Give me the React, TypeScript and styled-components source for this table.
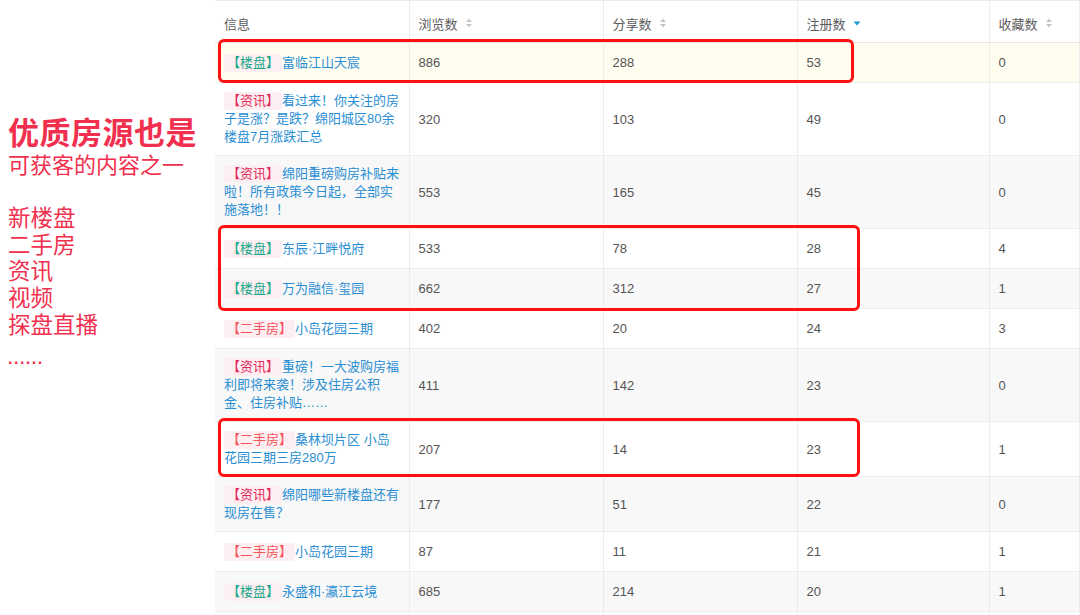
import styled, { createGlobalStyle } from 'styled-components';

type Kind = 'loupan' | 'zixun' | 'ershou';

interface Row {
  kind: Kind;
  title: string;
  views: number;
  shares: number;
  signups: number;
  favs: number;
}

const rows: Row[] = [
  { kind: 'loupan', title: '富临江山天宸', views: 886, shares: 288, signups: 53, favs: 0 },
  { kind: 'zixun', title: '看过来！你关注的房子是涨？是跌？绵阳城区80余楼盘7月涨跌汇总', views: 320, shares: 103, signups: 49, favs: 0 },
  { kind: 'zixun', title: '绵阳重磅购房补贴来啦！所有政策今日起，全部实施落地！！', views: 553, shares: 165, signups: 45, favs: 0 },
  { kind: 'loupan', title: '东辰·江畔悦府', views: 533, shares: 78, signups: 28, favs: 4 },
  { kind: 'loupan', title: '万为融信·玺园', views: 662, shares: 312, signups: 27, favs: 1 },
  { kind: 'ershou', title: '小岛花园三期', views: 402, shares: 20, signups: 24, favs: 3 },
  { kind: 'zixun', title: '重磅！一大波购房福利即将来袭！涉及住房公积金、住房补贴……', views: 411, shares: 142, signups: 23, favs: 0 },
  { kind: 'ershou', title: '桑林坝片区 小岛花园三期三房280万', views: 207, shares: 14, signups: 23, favs: 1 },
  { kind: 'zixun', title: '绵阳哪些新楼盘还有现房在售？', views: 177, shares: 51, signups: 22, favs: 0 },
  { kind: 'ershou', title: '小岛花园三期', views: 87, shares: 11, signups: 21, favs: 1 },
  { kind: 'loupan', title: '永盛和·瀛江云境', views: 685, shares: 214, signups: 20, favs: 1 },
  { kind: 'loupan', title: '', views: 0, shares: 0, signups: 0, favs: 0 },
];

const tagText: Record<Kind, string> = {
  loupan: '【楼盘】',
  zixun: '【资讯】',
  ershou: '【二手房】',
};

const tagColor: Record<Kind, string> = {
  loupan: '#1ba88c',
  zixun: '#df2a5c',
  ershou: '#f4525c',
};

// annotation boxes drawn over the table
const marks = [
  { left: 3, top: 39, width: 636, height: 44 },
  { left: 3, top: 225, width: 642, height: 86 },
  { left: 3, top: 418, width: 642, height: 59 },
];

const headers = [
  { label: '信息', sort: 'none' as const },
  { label: '浏览数', sort: 'both' as const },
  { label: '分享数', sort: 'both' as const },
  { label: '注册数', sort: 'desc' as const },
  { label: '收藏数', sort: 'both' as const },
];

function SortIcon({ sort }: { sort: 'none' | 'both' | 'desc' }) {
  if (sort === 'none') return null;
  if (sort === 'desc') {
    return (
      <svg width="8" height="10" viewBox="0 0 8 10">
        <path d="M0.5 3.5 L7.5 3.5 L4 7.5 Z" fill="#1e9ad6" />
      </svg>
    );
  }
  return (
    <svg width="8" height="10" viewBox="0 0 8 10">
      <path d="M1 4 L7 4 L4 0.8 Z" fill="#c4c4c4" />
      <path d="M1 6 L7 6 L4 9.2 Z" fill="#c4c4c4" />
    </svg>
  );
}

export default function App() {
  return (
    <>
      <GlobalStyle />
      <Page>
        <Side>
          <Headline>优质房源也是</Headline>
          <Subline>可获客的内容之一</Subline>
          <TypeList>
            <li>新楼盘</li>
            <li>二手房</li>
            <li>资讯</li>
            <li>视频</li>
            <li>探盘直播</li>
          </TypeList>
          <Dots>......</Dots>
        </Side>

        <TableWrap>
          <Table>
            <colgroup>
              <col style={{ width: 194 }} />
              <col style={{ width: 194 }} />
              <col style={{ width: 194 }} />
              <col style={{ width: 192 }} />
              <col />
            </colgroup>
            <thead>
              <tr>
                {headers.map((h) => (
                  <Th key={h.label}>
                    <HeadInner>
                      {h.label}
                      <SortIcon sort={h.sort} />
                    </HeadInner>
                  </Th>
                ))}
              </tr>
            </thead>
            <tbody>
              {rows.map((r, i) => (
                <Tr key={i} $hover={i === 0} $plain={i % 2 === 1}>
                  <InfoCell>
                    {r.title && (
                      <InfoText>
                        <Tag $color={tagColor[r.kind]}>{tagText[r.kind]}</Tag>
                        {r.title}
                      </InfoText>
                    )}
                  </InfoCell>
                  <NumCell>{r.title && r.views}</NumCell>
                  <NumCell>{r.title && r.shares}</NumCell>
                  <NumCell>{r.title && r.signups}</NumCell>
                  <NumCell>{r.title && r.favs}</NumCell>
                </Tr>
              ))}
            </tbody>
          </Table>

          {marks.map((m, i) => (
            <Mark
              key={i}
              style={{ left: m.left, top: m.top, width: m.width, height: m.height }}
            />
          ))}
        </TableWrap>
      </Page>
    </>
  );
}

const GlobalStyle = createGlobalStyle`
  html, body {
    margin: 0;
    padding: 0;
    background: #fff;
  }
  body {
    font-family: "Liberation Sans", "Noto Sans CJK SC", sans-serif;
  }
`;

const Page = styled.div`
  display: flex;
  width: 1080px;
  height: 615px;
  overflow: hidden;
  background: #fff;
`;

const Side = styled.div`
  width: 215px;
  flex-shrink: 0;
  box-sizing: border-box;
  padding: 112px 0 0 8px;
  color: #f0304e;
  font-family: "Noto Sans CJK SC", sans-serif;
`;

const Headline = styled.div`
  font-size: 31px;
  font-weight: 700;
  line-height: 38px;
  letter-spacing: 0.5px;
`;

const Subline = styled.div`
  font-size: 22px;
  line-height: 26px;
`;

const TypeList = styled.ul`
  list-style: none;
  margin: 27px 0 0;
  padding: 0;
  font-size: 22.5px;
  line-height: 26.7px;
`;

const Dots = styled.div`
  font-family: "Liberation Sans", sans-serif;
  font-size: 16px;
  font-weight: 700;
  line-height: 20px;
  margin-top: 12px;
  letter-spacing: 1.5px;
`;

const TableWrap = styled.div`
  position: relative;
  flex: 1;
  min-width: 0;
`;

const Table = styled.table`
  width: 100%;
  table-layout: fixed;
  border-collapse: collapse;
  font-size: 13px;
`;

const Th = styled.th`
  height: 42px;
  box-sizing: border-box;
  padding: 3px 9px 0;
  text-align: left;
  font-weight: 400;
  color: #5d5d5d;
  font-family: "Noto Sans CJK SC", sans-serif;
  font-size: 13px;
  border-top: 1px solid #ececec;
  border-right: 1px solid #ececec;
  border-bottom: 1px solid #e6e6e6;
  vertical-align: middle;
`;

const HeadInner = styled.div`
  display: flex;
  align-items: center;
  gap: 7px;
`;

const Tr = styled.tr<{ $hover: boolean; $plain: boolean }>`
  background: ${({ $hover, $plain }) =>
    $hover ? '#fffdf0' : $plain ? '#ffffff' : '#f8f8f8'};
  border-bottom: 1px solid #ededed;
`;

const InfoCell = styled.td`
  height: 40px;
  box-sizing: border-box;
  padding: 9px 0 9px 9px;
  border-right: 1px solid #ececec;
  vertical-align: middle;
`;

const InfoText = styled.div`
  width: 177px;
  color: #2a8ed3;
  font-family: "Liberation Sans", "Noto Sans CJK SC", sans-serif;
  font-size: 13px;
  line-height: 18px;
  word-break: break-all;
  text-spacing-trim: space-all;
`;

const Tag = styled.span<{ $color: string }>`
  display: inline-block;
  color: ${({ $color }) => $color};
  background: #fdeff1;
  border-radius: 3px;
  padding: 0 3px;
  line-height: 18px;
  text-spacing-trim: space-all;
`;

const NumCell = styled.td`
  padding: 0 9px;
  border-right: 1px solid #ececec;
  vertical-align: middle;
  color: #555;
  font-size: 13px;
`;

const Mark = styled.div`
  position: absolute;
  box-sizing: border-box;
  border: 3px solid #ff1010;
  border-radius: 6px;
  pointer-events: none;
`;
